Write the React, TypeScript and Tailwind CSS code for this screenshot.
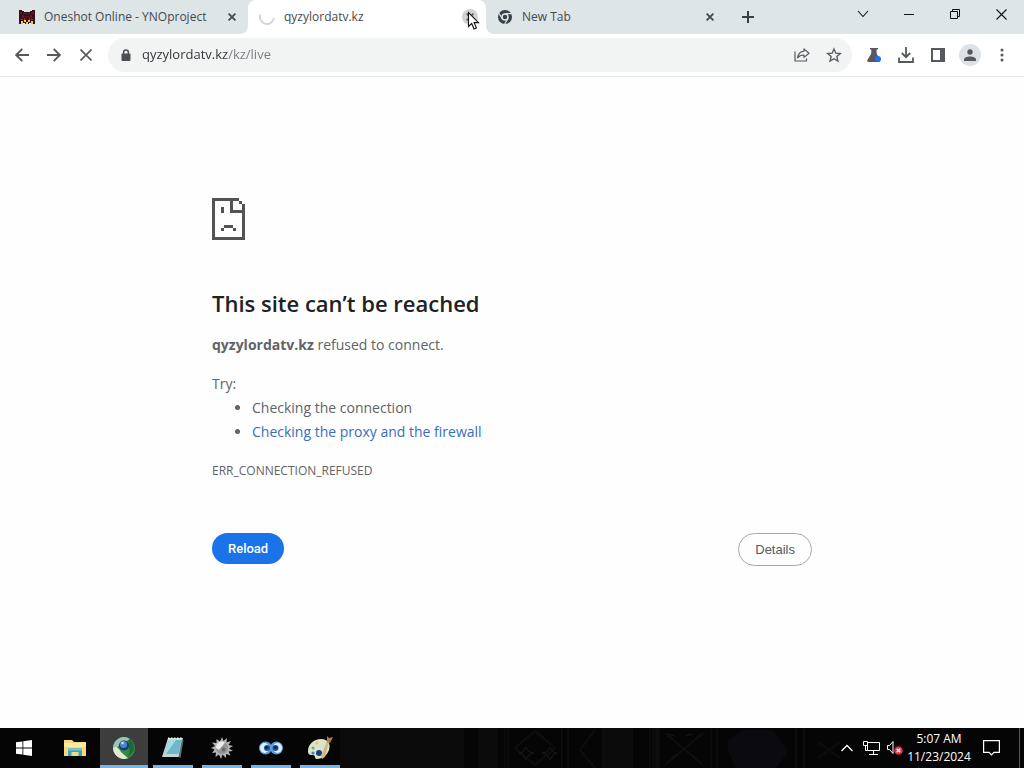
import { useState } from "react";
import type { ReactNode } from "react";

const CloseIcon = ({ className }: { className?: string }) => (
  <svg className={className} width="8" height="8" viewBox="0 0 8 8" fill="none" stroke="currentColor" strokeWidth="1.8">
    <path d="M.6.6l6.8 6.8M7.4.6L.6 7.4" />
  </svg>
);

const CatFavicon = () => (
  <svg width="16" height="16" viewBox="0 0 16 16" shapeRendering="crispEdges">
    <path d="M0 1h3v1h2v1h6V2h2V1h3v14H0z" fill="#35101a" />
    <path d="M1 3h2v2H1zM13 3h2v2h-2zM4 4h8v1H4zM3 6h2v3H3zM11 6h2v3h-2zM6 7h4v1H6z" fill="#6b1524" />
    <path d="M2 10h2v1H2zM5 9h1v2H5zM10 9h1v2h-1zM12 10h2v1h-2z" fill="#b0321f" />
    <path d="M2 12h2v3H2zM5 11h2v2H5zM7 13h2v2H7zM9 11h2v2H9zM12 12h2v3h-2z" fill="#f2c83c" />
    <path d="M4 14h2v1H4zM10 14h2v1h-2z" fill="#fff4c4" />
  </svg>
);

const Spinner = () => (
  <svg width="16" height="16" viewBox="0 0 16 16" fill="none" stroke="#d3d7db" strokeWidth="2">
    <path d="M1.4 5.6A7 7 0 1 0 14.9 9" />
  </svg>
);

const ChromeFavicon = () => (
  <svg width="14" height="14" viewBox="0 0 24 24">
    <circle cx="12" cy="12" r="12" fill="#343f46" />
    <circle cx="12" cy="12" r="6.4" fill="#dee5e7" />
    <circle cx="12" cy="12" r="3.8" fill="#343f46" />
    <path d="M12 6.2h11M7 14.8L1.4 5.2M17 14.9l-5.6 9.2" stroke="#dee5e7" strokeWidth="2" />
  </svg>
);

const Cursor = () => (
  <svg className="pointer-events-none absolute top-[11px] right-1.5" width="13" height="20" viewBox="0 0 13 20">
    <path d="M1.5 1.5v14l3.2-3 2.3 5.5 2.4-1-2.3-5.4h4.4z" fill="#fff" stroke="#111" strokeWidth="1.1" />
  </svg>
);

// The curved feet that join the active tab to the toolbar
const TabFeet = () => (
  <>
    <svg className="absolute bottom-0 -left-2" width="8" height="8" viewBox="0 0 8 8" fill="#fff">
      <path d="M8 0v8H0a8 8 0 0 0 8-8z" />
    </svg>
    <svg className="absolute -right-2 bottom-0" width="8" height="8" viewBox="0 0 8 8" fill="#fff">
      <path d="M0 0v8h8a8 8 0 0 1-8-8z" />
    </svg>
  </>
);

type TabProps = { title: string; icon: ReactNode; active?: boolean };

const Tab = ({ title, icon, active }: TabProps) => (
  <div
    role="tab"
    aria-selected={!!active}
    className={
      active
        ? "relative flex h-full min-w-0 max-w-60 flex-1 items-center rounded-t-lg bg-white pr-2 pl-[11px]"
        : "flex h-full min-w-0 max-w-60 flex-1 items-center pr-3 pl-[11px]"
    }
  >
    <span className="flex w-4 shrink-0 justify-center">{icon}</span>
    <span className="ml-[9px] flex-1 truncate text-xs text-[#45494d]">{title}</span>
    <button
      aria-label={`Close ${title}`}
      className={
        active
          ? "flex size-4 items-center justify-center rounded-full bg-[#d0d2d4] text-[#5f6368]"
          : "-mr-1 flex size-4 items-center justify-center text-[#45494d]"
      }
    >
      <CloseIcon />
    </button>
    {active && <TabFeet />}
    {active && <Cursor />}
  </div>
);

const TitleBar = () => (
  <header className="flex h-[34px] shrink-0 bg-[#dee5e7] pl-2">
    <div role="tablist" className="flex min-w-0 max-w-[718px] flex-1">
      <Tab title="Oneshot Online - YNOproject" icon={<CatFavicon />} />
      <Tab title="qyzylordatv.kz" icon={<Spinner />} active />
      <Tab title="New Tab" icon={<ChromeFavicon />} />
    </div>
    <button aria-label="New tab" className="ml-2 flex w-7 items-center justify-center text-[#3c4043]">
      <svg width="12" height="12" viewBox="0 0 12 12" stroke="currentColor" strokeWidth="2">
        <path d="M6 0v12M0 6h12" />
      </svg>
    </button>
    <div className="ml-auto flex h-7 text-[#111]">
      <button aria-label="Search tabs" className="flex w-[46px] items-center justify-center">
        <svg width="12" height="8" viewBox="0 0 12 8" fill="none" stroke="currentColor" strokeWidth="1.1">
          <path d="M1 1l5 5.5L11 1" />
        </svg>
      </button>
      <button aria-label="Minimize" className="flex w-[46px] items-center justify-center">
        <svg width="10" height="10" viewBox="0 0 10 10" stroke="currentColor">
          <path d="M0 5.5h10" />
        </svg>
      </button>
      <button aria-label="Restore" className="flex w-[46px] items-center justify-center">
        <svg width="10" height="10" viewBox="0 0 10 10" fill="none" stroke="currentColor">
          <path d="M.5 2.5h7v7h-7zM2.5 2.5v-2h7v7h-2" />
        </svg>
      </button>
      <button aria-label="Close window" className="flex w-[46px] items-center justify-center">
        <svg width="11" height="11" viewBox="0 0 11 11" stroke="currentColor" strokeWidth="1.1">
          <path d="M.5.5l10 10M10.5.5l-10 10" />
        </svg>
      </button>
    </div>
  </header>
);

const ToolButton = ({ label, children }: { label: string; children: ReactNode }) => (
  <button aria-label={label} className="flex size-8 shrink-0 items-center justify-center text-[#55595e]">
    {children}
  </button>
);

const Toolbar = () => {
  const [url, setUrl] = useState("qyzylordatv.kz/kz/live");

  return (
    <div className="flex h-[43px] shrink-0 items-center border-b border-[#e6e7e8] bg-white px-1.5">
      <ToolButton label="Back">
        <svg width="14" height="14" viewBox="0 0 14 14" fill="none" stroke="currentColor" strokeWidth="1.9">
          <path d="M14 7H1.5M7.3 .8L1.2 7l6.1 6.2" />
        </svg>
      </ToolButton>
      <ToolButton label="Forward">
        <svg width="14" height="14" viewBox="0 0 14 14" fill="none" stroke="currentColor" strokeWidth="1.9">
          <path d="M0 7h12.5M6.7 .8L12.8 7l-6.1 6.2" />
        </svg>
      </ToolButton>
      <ToolButton label="Stop">
        <svg width="12" height="12" viewBox="0 0 12 12" stroke="currentColor" strokeWidth="1.6">
          <path d="M.5.5l11 11M11.5.5l-11 11" />
        </svg>
      </ToolButton>
      <div className="mx-1.5 flex h-[34px] min-w-0 flex-1 items-center rounded-full bg-[#f2f3f3] pr-0.5 pl-[13px]">
        <svg className="shrink-0" width="10" height="13" viewBox="0 0 10 13">
          <path d="M2.6 5V3.4a2.4 2.4 0 0 1 4.8 0V5" fill="none" stroke="#4c5055" strokeWidth="1.5" />
          <rect x="0.5" y="4.6" width="9" height="7.400" rx="1" fill="#4c5055" />
        </svg>
        <input
          type="text"
          aria-label="Address"
          value={url}
          onChange={(e) => setUrl(e.target.value)}
          className="ml-[11px] min-w-0 flex-1 bg-linear-to-r from-[#303236] from-[86px] to-[#777b80] to-[86px] bg-clip-text text-[13px] text-transparent caret-black outline-none"
        />
        <ToolButton label="Share this page">
          <svg width="16" height="14" viewBox="0 0 16 14" fill="none" stroke="currentColor" strokeWidth="1.2">
            <path d="M1 3.5V13h11.5v-2.5" />
            <path d="M10 3.2V.9l5 4.3-5 4.2V7C7 7 5 7.8 3.6 9.8 4.2 6 6.5 3.6 10 3.2z" strokeLinejoin="round" />
          </svg>
        </ToolButton>
        <ToolButton label="Bookmark this tab">
          <svg width="16" height="16" viewBox="0 0 24 24" fill="none" stroke="currentColor" strokeWidth="2">
            <path d="M12 3l2.7 6.3 6.8.6-5.2 4.500 1.600 6.700-5.900-3.600-5.900 3.600 1.600-6.700L2.500 9.900l6.800-.6z" />
          </svg>
        </ToolButton>
      </div>
      <ToolButton label="Chrome Labs">
        <svg width="14" height="14" viewBox="0 0 14 14">
          <path d="M3 0h8v1.600H9.600v4L13 12c.4 1-.1 2-1.200 2H1.600C.5 14 0 13 .4 12l3.900-6.400v-4H3z" fill="#55595e" />
          <circle cx="11" cy="11" r="3" fill="#1a73e8" />
        </svg>
      </ToolButton>
      <ToolButton label="Downloads">
        <svg width="16" height="16" viewBox="0 0 16 16" fill="none" stroke="currentColor" strokeWidth="1.800">
          <path d="M8 0v10M3.800 6L8 10.200 12.200 6M1 10.500V15h14v-4.500" />
        </svg>
      </ToolButton>
      <ToolButton label="Side panel">
        <svg width="14" height="14" viewBox="0 0 14 14">
          <path d="M1 1h12v12H1z" fill="#fff" stroke="currentColor" strokeWidth="2" />
          <path d="M9 1h4v12H9z" fill="currentColor" />
        </svg>
      </ToolButton>
      <ToolButton label="Profile">
        <span className="flex size-[22px] items-center justify-center rounded-full bg-[#dee1e6]">
          <svg width="12" height="12" viewBox="0 0 12 12" fill="currentColor">
            <circle cx="6" cy="3" r="2.700" />
            <path d="M0 12v-1.500C0 8.500 3 7.500 6 7.500s6 1 6 3V12z" />
          </svg>
        </span>
      </ToolButton>
      <ToolButton label="Menu">
        <svg width="4" height="14" viewBox="0 0 4 14" fill="currentColor">
          <circle cx="2" cy="2" r="1.500" />
          <circle cx="2" cy="7" r="1.500" />
          <circle cx="2" cy="12" r="1.500" />
        </svg>
      </ToolButton>
    </div>
  );
};

const SadPage = () => (
  <svg width="33" height="42" viewBox="0 0 11 14" fill="#535353" shapeRendering="crispEdges">
    <path d="M0 0h9v1H7v3h4v10H0zM1 1v12h9V5H6V1z" fillRule="evenodd" />
    <path d="M9 1h1v1H9zM10 2h1v3h-1zM3 3h1v2H3zM4 9h3v1H4zM3 10h1v1H3zM7 10h1v1H7z" />
  </svg>
);

const ErrorPage = () => (
  <main className="min-h-0 flex-1 overflow-hidden bg-[#fefefe] px-6 pt-[121px] text-sm leading-6 text-[#606367]">
    <div className="mx-auto max-w-[600px]">
      <SadPage />
      <h1 className="mt-12 text-[22px] leading-[30px] font-semibold text-[#202124]">This site can’t be reached</h1>
      <p className="mt-[15px]">
        <strong className="font-bold">qyzylordatv.kz</strong> refused to connect.
      </p>
      <div className="mt-[15px]">
        <p>Try:</p>
        <ul className="list-disc pl-10">
          <li>Checking the connection</li>
          <li>
            <a href="#buttons" className="text-[#3a6cc0]">
              Checking the proxy and the firewall
            </a>
          </li>
        </ul>
      </div>
      <p className="mt-[15px] text-xs leading-6">ERR_CONNECTION_REFUSED</p>
      <div
        id="buttons"
        className="mt-[50px] flex items-start justify-between font-['Liberation_Sans',Arial,sans-serif] text-[13px] leading-[15px]"
      >
        <button className="rounded-full bg-[#1a73e8] px-4 py-2 font-[Roboto,'Liberation_Sans',sans-serif] font-medium text-white">
          Reload
        </button>
        <button className="rounded-full border border-[#a5a8ac] px-4 py-2 text-[#55595e]">Details</button>
      </div>
    </div>
  </main>
);

const ExplorerIcon = () => (
  <svg width="22" height="18" viewBox="0 0 22 18">
    <path d="M0 1h8l2 2h12v14H0z" fill="#f6d978" />
    <path d="M0 4h22v4H0z" fill="#ffe99f" />
    <path d="M4 9.500h14V17h-3.500v-4h-7v4H4z" fill="#38a3c9" />
    <path d="M4 9.500h14v2H4z" fill="#6dc5df" />
  </svg>
);

const GlobeIcon = () => (
  <svg width="24" height="24" viewBox="0 0 24 24">
    <circle cx="12" cy="12" r="11" fill="#2f8a49" />
    <path d="M1 12A11 11 0 0 1 18 3L8 9l-5 4z" fill="#9cc4b0" />
    <path d="M1 12c3-2 5-1 8 4l7 6.200A11 11 0 0 1 1 12z" fill="#e4e6d0" />
    <path d="M17 3c5 3 7 9 3 14l-4 4c2-5 2-8 0-11z" fill="#1d6a38" />
    <circle cx="12" cy="9.500" r="5" fill="#17396b" />
    <circle cx="11.500" cy="8.500" r="3.500" fill="#4a86cf" />
    <circle cx="10.500" cy="7" r="1.300" fill="#c6e0fa" />
  </svg>
);

const NotepadIcon = () => (
  <svg width="24" height="22" viewBox="0 0 24 22">
    <path d="M7 1h15l-3 19H1z" fill="#c7d3d6" />
    <path d="M8 3h12.500L17.500 17H3z" fill="#6fb8c9" />
    <path d="M8 3h7L5 17H3z" fill="#a4dbe4" />
    <path d="M21 2l1.500 1-3 18-2-1z" fill="#586a70" />
    <path d="M7 1.500h15" stroke="#edf4f5" strokeDasharray="1.500 1.500" strokeWidth="2" />
  </svg>
);

const GearIcon = () => (
  <svg width="22" height="22" viewBox="0 0 22 22">
    <path
      d="M11 0l1.500 4L16 1l-.5 4.500L20 4l-2.500 4 4.500 1-4 2.500 4 2.500-4.500.5 2 4-4.500-1.500V21l-3.500-3.500L10 22l-2-4.500L4.500 20l.5-4.500L1 16l2.500-3.500L0 11l4-2-3-3.500 4.500.5L5.500 2 9 4.500z"
      fill="#b4b4b4"
    />
    <circle cx="11" cy="11" r="6" fill="#949494" />
    <path d="M5 11a6 6 0 0 1 9-5.500L8 13z" fill="#ececec" />
    <circle cx="12.500" cy="12.500" r="2" fill="#6b6b6b" />
  </svg>
);

const EyesIcon = () => (
  <svg width="24" height="16" viewBox="0 0 24 16">
    <ellipse cx="6.500" cy="8" rx="6.500" ry="6.500" fill="#5d9fe0" />
    <ellipse cx="17.500" cy="8" rx="6.500" ry="6.500" fill="#5d9fe0" />
    <ellipse cx="5.500" cy="8" rx="4.500" ry="5" fill="#dceffc" />
    <ellipse cx="18.500" cy="8" rx="4.500" ry="5" fill="#dceffc" />
    <circle cx="8" cy="8" r="3" fill="#1d4f94" />
    <circle cx="16.500" cy="8" r="3" fill="#1d4f94" />
    <circle cx="7.500" cy="7.500" r="1.300" fill="#071a38" />
    <circle cx="16.500" cy="7.500" r="1.300" fill="#071a38" />
  </svg>
);

const PaletteIcon = () => (
  <svg width="26" height="24" viewBox="0 0 26 24">
    <path d="M1 15C1 8 7 3 14 3s10 5 8 11-8 9-12 9c-3 0-1-4-4-4s-5 0-5-4z" fill="#dce3cc" />
    <circle cx="6" cy="12" r="1.500" fill="#6fae70" />
    <circle cx="10" cy="7" r="1.500" fill="#e0c27a" />
    <circle cx="12" cy="17" r="3" fill="#1c3b78" />
    <circle cx="6" cy="17" r="1.600" fill="#3b82c9" />
    <path d="M20 5l2 1-4 15-3 2-1-3z" fill="#d0b883" />
    <path d="M20 0l2 2 4-1-3 6-3-1z" fill="#b07a45" />
  </svg>
);

type TaskProps = { label: string; children: ReactNode; state?: "active" | "open" };

const Task = ({ label, children, state }: TaskProps) => (
  <button
    aria-label={label}
    className={
      state === "active"
        ? "flex h-full w-12 flex-col items-center bg-[#3d3d3e]"
        : "flex h-full w-12 flex-col items-center"
    }
  >
    <span className="flex w-full flex-1 items-center justify-center pt-0.5">{children}</span>
    <span
      className={
        state === "active" ? "h-[3px] w-full bg-[#76b5e6]" : state === "open" ? "h-[3px] w-10 bg-[#76b5e6]" : "h-[3px]"
      }
    />
  </button>
);

const Wallpaper = () => (
  <svg
    className="absolute inset-0 h-full w-full"
    viewBox="0 0 1024 40"
    preserveAspectRatio="xMidYMid slice"
    fill="none"
    aria-hidden="true"
  >
    <path d="M340 0h124v40H340zM478 0h20v40h-20zM603 0h30v40h-30zM652 0h8v40h-8z" fill="#0b0b0c" />
    <path d="M505 0v40M508 0v40M562 0v40M568 0v40M603 0v40M650 0v40M657 0v40M711 0v40M717 0v40" stroke="#131315" />
    <path d="M515 20L535 3l20 17-20 17zM595 2l-15 20 15 18M665 5l38 32M703 5l-38 32" stroke="#0e0e10" strokeWidth="2" />
    <path
      d="M526 19l3 5 5 1-5 2-3 5-3-5-4-2 4-1zM550 19l3 5 4 1-4 2-3 5-3-5-5-2 5-1zM668 6l6 2M692 6l-6 2M672 29l5-2M693 27l2 3"
      stroke="#18181a"
    />
    <path d="M728 12l14-10h32l14 22-12 16h-40l-8-16z" fill="#0b0b0f" />
    <path d="M796 0v40M804 0v40M818 14l22 16M840 14l-22 16" stroke="#0b0b0c" strokeWidth="3" />
  </svg>
);

const Taskbar = () => (
  <footer className="relative h-10 shrink-0 bg-[#050506] text-white">
    <Wallpaper />
    <div className="relative flex h-full items-stretch">
      <button aria-label="Start" className="mr-[3px] flex w-12 items-center justify-center">
        <svg width="16" height="16" viewBox="0 0 16 16" fill="#fff">
          <path d="M0 2.300l6.500-.9v6.200H0zM7.300 1.300L16 0v7.600H7.300zM0 8.400h6.500v6.200L0 13.700zM7.300 8.400H16V16l-8.700-1.300z" />
        </svg>
      </button>
      <nav aria-label="Taskbar" className="flex gap-px">
        <Task label="File Explorer">
          <ExplorerIcon />
        </Task>
        <Task label="Browser" state="active">
          <GlobeIcon />
        </Task>
        <Task label="Notepad" state="open">
          <NotepadIcon />
        </Task>
        <Task label="Settings" state="open">
          <GearIcon />
        </Task>
        <Task label="Eyes" state="open">
          <EyesIcon />
        </Task>
        <Task label="Paint" state="open">
          <PaletteIcon />
        </Task>
      </nav>
      <div className="ml-auto flex items-center">
        <button aria-label="Show hidden icons" className="flex w-6 justify-center">
          <svg width="12" height="8" viewBox="0 0 12 8" fill="none" stroke="#fff" strokeWidth="1.300">
            <path d="M.5 7L6 1.500 11.500 7" />
          </svg>
        </button>
        <button aria-label="Network" className="flex w-6 justify-center">
          <svg width="17" height="14" viewBox="0 0 17 14" fill="none" stroke="#fff">
            <path d="M4.500 1.500h12v8h-12zM10.500 9.500v4M6 13.500h9" />
            <path d="M.5.5h4v4h-4zM2.500 4.500v5h2" />
          </svg>
        </button>
        <button aria-label="Volume muted" className="flex w-6 justify-center">
          <svg width="16" height="14" viewBox="0 0 16 14">
            <path d="M.5 4.500h2l3.500-4v12l-3.500-4h-2z" fill="none" stroke="#fff" />
            <circle cx="11.500" cy="9.500" r="4.300" fill="#d9303e" />
            <path d="M9.700 7.700l3.600 3.600M13.300 7.700l-3.600 3.600" stroke="#fff" strokeWidth="1.300" />
          </svg>
        </button>
        <time dateTime="2024-11-23T05:07" className="flex w-16 flex-col text-center text-xs leading-[18px]">
          <span>5:07 AM</span>
          <span>11/23/2024</span>
        </time>
        <button aria-label="Notifications" className="flex w-10 justify-center">
          <svg width="17" height="16" viewBox="0 0 17 16" fill="none" stroke="#fff" strokeWidth="1.200">
            <path d="M.6.6h15.800v11.800H11l-2.500 2.600L6 12.400H.6z" />
          </svg>
        </button>
        <button aria-label="Show desktop" className="ml-2 h-10 w-[5px] border-l border-[#58585a]" />
      </div>
    </div>
  </footer>
);

export default function App() {
  return (
    <div className="flex h-screen flex-col overflow-hidden bg-white font-['Open_Sans','Noto_Sans',sans-serif]">
      <TitleBar />
      <Toolbar />
      <ErrorPage />
      <Taskbar />
    </div>
  );
}
